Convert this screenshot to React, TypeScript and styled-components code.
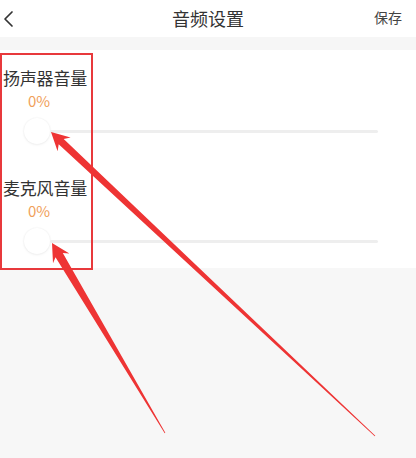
import React from "react";
import styled, { createGlobalStyle } from "styled-components";

const Global = createGlobalStyle`
  html, body { margin: 0; padding: 0; background: #f7f7f7; }
  body { font-family: "Noto Sans CJK SC", "Noto Sans", sans-serif; }
  #root { width: 416px; height: 458px; position: relative; overflow: hidden; }
`;

const Page = styled.div`
  width: 416px;
  height: 458px;
  display: flex;
  flex-direction: column;
  background: #f7f7f7;
`;

const Header = styled.header`
  height: 37px;
  background: #ffffff;
  display: grid;
  grid-template-columns: 60px 1fr 60px;
  align-items: center;
`;

const BackButton = styled.div`
  display: flex;
  align-items: center;
  padding-left: 2px;
  height: 100%;
`;

const Title = styled.div`
  text-align: center;
  font-size: 18px;
  color: #333333;
  line-height: 24px;
  padding-bottom: 2px;
`;

const Save = styled.div`
  text-align: right;
  padding-right: 14px;
  font-size: 14px;
  color: #444444;
  line-height: 20px;
  padding-bottom: 3px;
`;

const Band = styled.div`
  height: 13px;
  background: #f6f6f6;
`;

const Panel = styled.section`
  background: #ffffff;
  padding: 18px 0 14px 3px;
  display: flex;
  flex-direction: column;
  gap: 34px;
`;

const Group = styled.div`
  display: flex;
  flex-direction: column;
`;

const Label = styled.div`
  font-size: 17px;
  line-height: 20px;
  color: #333333;
  letter-spacing: -0.2px;
`;

const Percent = styled.div`
  margin-top: 4px;
  padding-left: 25px;
  font-size: 15px;
  line-height: 18px;
  color: #f0a05a;
`;

const SliderRow = styled.div`
  margin-top: 8px;
  height: 26px;
  display: flex;
  align-items: center;
  padding-left: 21px;
`;

const Thumb = styled.div`
  width: 26px;
  height: 26px;
  border-radius: 50%;
  background: #ffffff;
  box-shadow: 0 0 2px rgba(0, 0, 0, 0.08), 0 1px 3px rgba(0, 0, 0, 0.05);
  flex: none;
`;

const Track = styled.div`
  width: 328px;
  height: 3px;
  background: #eeeeee;
  border-radius: 2px;
`;

const Fill = styled.div`
  flex: 1;
  background: #f7f7f7;
`;

const HighlightBox = styled.div`
  position: absolute;
  left: 0;
  top: 53px;
  width: 89px;
  height: 213px;
  border: 2px solid #e8393c;
  pointer-events: none;
`;

const Overlay = styled.svg`
  position: absolute;
  left: 0;
  top: 0;
  pointer-events: none;
`;

type Pt = [number, number];

function arrowPoints(tip: Pt, tail: Pt, shaft: number): string {
  const dx = tail[0] - tip[0];
  const dy = tail[1] - tip[1];
  const len = Math.hypot(dx, dy);
  const u: Pt = [dx / len, dy / len];
  const n: Pt = [-u[1], u[0]];
  const at = (d: number, w: number): string =>
    `${(tip[0] + u[0] * d + n[0] * w).toFixed(1)},${(tip[1] + u[1] * d + n[1] * w).toFixed(1)}`;
  return [
    at(0, 0),
    at(18, 9.5),
    at(14, shaft),
    at(len, 0.4),
    at(len, -0.4),
    at(14, -shaft),
    at(18, -9.5),
  ].join(" ");
}

const sliders = [
  { label: "扬声器音量", value: 0 },
  { label: "麦克风音量", value: 0 },
];

export default function App() {
  return (
    <>
      <Global />
      <Page>
        <Header>
          <BackButton>
            <svg width="14" height="20" viewBox="0 0 14 20">
              <polyline
                points="10,3 3,10 10,17"
                fill="none"
                stroke="#333"
                strokeWidth="1.7"
                strokeLinecap="round"
                strokeLinejoin="round"
              />
            </svg>
          </BackButton>
          <Title>音频设置</Title>
          <Save>保存</Save>
        </Header>
        <Band />
        <Panel>
          {sliders.map((s) => (
            <Group key={s.label}>
              <Label>{s.label}</Label>
              <Percent>{s.value}%</Percent>
              <SliderRow>
                <Thumb />
                <Track />
              </SliderRow>
            </Group>
          ))}
        </Panel>
        <Fill />
      </Page>
      <HighlightBox />
      <Overlay width="416" height="458" viewBox="0 0 416 458">
        <polygon points={arrowPoints([51, 132], [375, 436], 3.6)} fill="#ee3434" />
        <polygon points={arrowPoints([52, 243], [165, 433], 4.2)} fill="#ee3434" />
      </Overlay>
    </>
  );
}
